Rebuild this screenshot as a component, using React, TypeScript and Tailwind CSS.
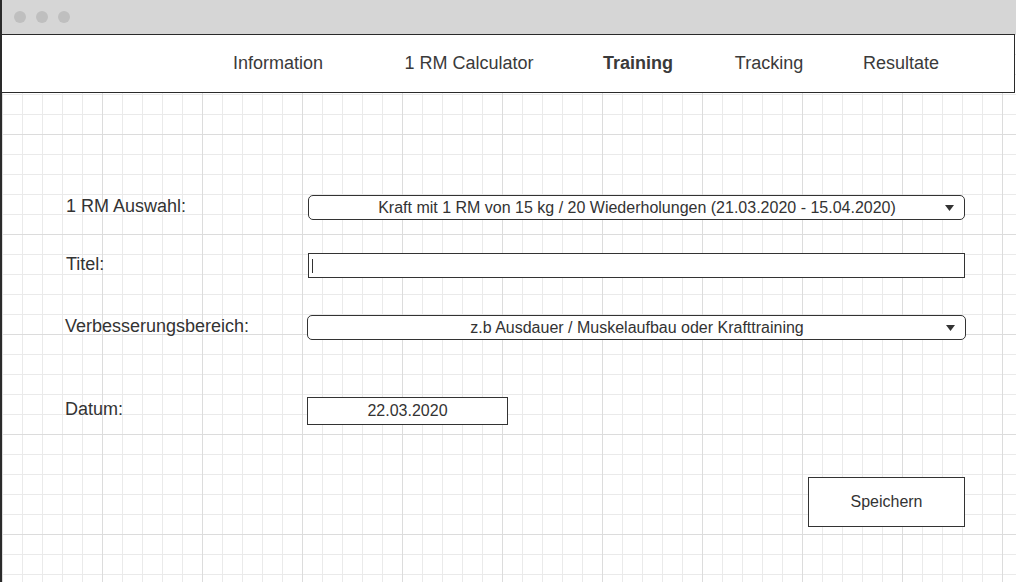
import { ReactNode } from 'react';

const navItems = [
  { label: 'Information', w: 'w-[160px]' },
  { label: '1 RM Calculator', w: 'w-[222px]' },
  { label: 'Training', w: 'w-[116px]', active: true },
  { label: 'Tracking', w: 'w-[146px]' },
  { label: 'Resultate', w: 'w-[118px]' },
];

function Arrow() {
  return (
    <svg width="9" height="6" viewBox="0 0 9 6" className="shrink-0">
      <polygon points="0,0 9,0 4.5,6" fill="#333" />
    </svg>
  );
}

function Row({ label, children, className }: { label: string; children: ReactNode; className: string }) {
  return (
    <div className={`flex items-center ${className}`}>
      <div className="w-[242px] shrink-0 text-[18px] leading-none pb-[4px]">{label}</div>
      {children}
    </div>
  );
}

export default function App() {
  return (
    <div className="w-[1016px] h-[582px] overflow-hidden flex flex-col border-l-2 border-[#2a2a2a] bg-white text-[#333] font-['Liberation_Sans',Arial,sans-serif]">
      {/* Title bar */}
      <div className="h-[34px] shrink-0 bg-[#d6d6d6] flex items-center gap-[10px] pl-[12px]">
        <span className="w-[12px] h-[12px] rounded-full bg-[#bfbfbf]" />
        <span className="w-[12px] h-[12px] rounded-full bg-[#bfbfbf]" />
        <span className="w-[12px] h-[12px] rounded-full bg-[#bfbfbf]" />
      </div>

      {/* Canvas */}
      <div className="flex-1 bg-white bg-[linear-gradient(to_right,#dcdcdc_1px,transparent_1px),linear-gradient(to_bottom,#dcdcdc_1px,transparent_1px),linear-gradient(to_right,#eaeaea_1px,transparent_1px),linear-gradient(to_bottom,#eaeaea_1px,transparent_1px)] bg-[size:100px_100px,100px_100px,20px_20px,20px_20px]">
        <nav className="h-[59px] w-[1013px] bg-white border-y border-r border-[#2a2a2a] flex items-center pl-[196px] pb-px text-[18px] text-[#3a3a3a]">
          {navItems.map((item) => (
            <div key={item.label} className={`${item.w} text-center ${item.active ? 'font-bold' : ''}`}>
              {item.label}
            </div>
          ))}
        </nav>

        <div className="pl-[64px] flex flex-col">
          <Row label="1 RM Auswahl:" className="mt-[102px]">
            <div className="w-[657px] h-[25px] border border-[#333] rounded-[5px] bg-white flex items-center pl-[20px] pr-[10px] text-[16px]">
              <span className="flex-1 text-center">
                Kraft mit 1 RM von 15 kg / 20 Wiederholungen (21.03.2020 - 15.04.2020)
              </span>
              <Arrow />
            </div>
          </Row>

          <Row label="Titel:" className="mt-[33px]">
            <div className="w-[657px] h-[25px] border border-[#333] bg-white flex items-center pl-[3px]">
              <span className="w-px h-[14px] bg-[#333]" />
            </div>
          </Row>

          <Row label="Verbesserungsbereich:" className="mt-[37px] -ml-px">
            <div className="w-[659px] h-[25px] border border-[#333] rounded-[5px] bg-white flex items-center pl-[20px] pr-[10px] text-[16px]">
              <span className="flex-1 text-center">z.b Ausdauer / Muskelaufbau oder Krafttraining</span>
              <Arrow />
            </div>
          </Row>

          <Row label="Datum:" className="mt-[57px] -ml-px">
            <div className="w-[201px] h-[28px] border border-[#333] bg-white flex items-center justify-center text-[16px]">
              22.03.2020
            </div>
          </Row>

          <div className="mt-[52px] ml-[742px] w-[157px] h-[50px] border border-[#333] bg-white flex items-center justify-center text-[16px]">
            Speichern
          </div>
        </div>
      </div>
    </div>
  );
}
